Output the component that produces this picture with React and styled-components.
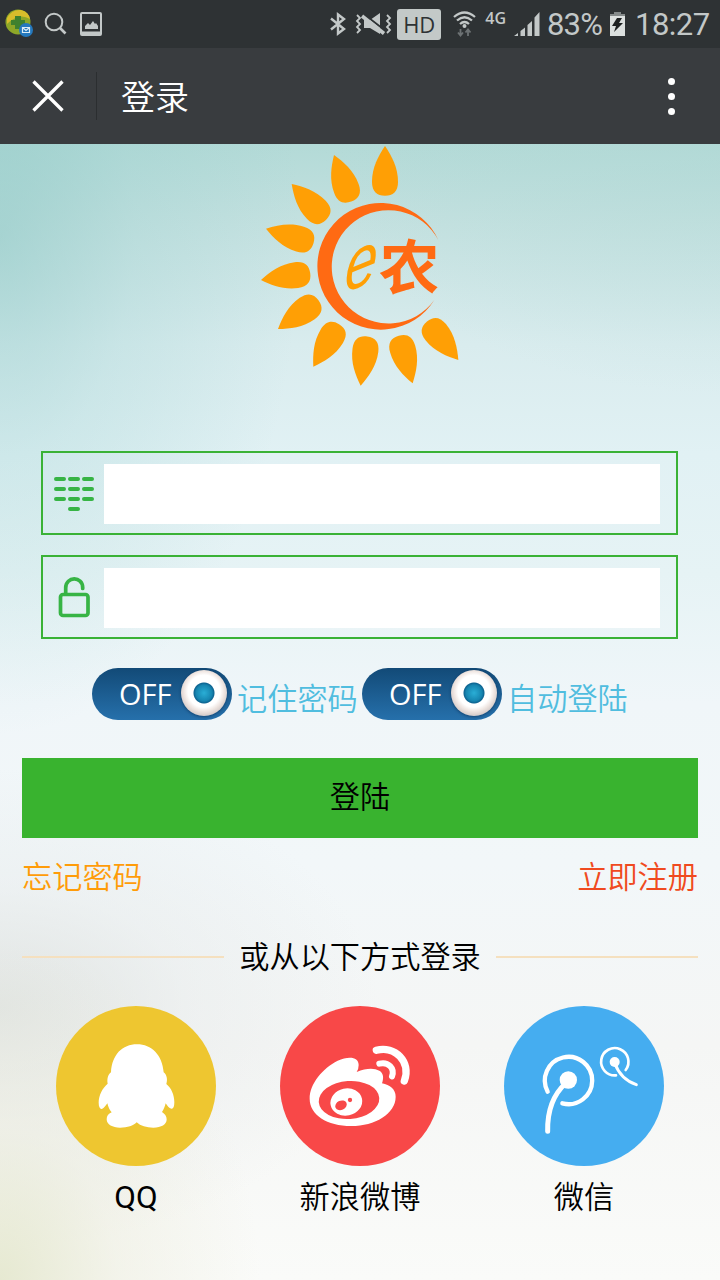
import React from "react";
import styled, { createGlobalStyle } from "styled-components";

const GlobalStyle = createGlobalStyle`
  * { box-sizing: border-box; }
  body { margin: 0; }
  svg { display: block; flex: none; }
`;

const Screen = styled.div`
  width: 720px;
  height: 1280px;
  display: flex;
  flex-direction: column;
  overflow: hidden;
  font-family: Roboto, "Noto Sans CJK SC", sans-serif;
  font-size: 30.2px;
  font-weight: 350;
  color: #000;
`;

const StatusBar = styled.header`
  height: 48px;
  flex: none;
  display: flex;
  align-items: center;
  justify-content: space-between;
  padding: 0 10px 0 5px;
  background: #2e3234;
  color: #c3c8c8;
`;

const StatusGroup = styled.div`
  display: flex;
  align-items: center;
`;

const HdBadge = styled.span`
  width: 44px;
  height: 31px;
  margin: 0 12px 0 5px;
  border-radius: 3px;
  background: #c3c9c8;
  color: #2e3234;
  font: 22px/30px "Open Sans", sans-serif;
  text-align: center;
`;

const Network = styled.span`
  height: 32px;
  margin: 0 8px 0 9px;
  font: 600 16px/20px "Open Sans", sans-serif;
`;

const StatusText = styled.span`
  width: ${(p) => p.$width}px;
  margin-left: ${(p) => p.$left || 0}px;
  font-size: 31px;
  font-weight: 400;
  line-height: 46px;
  letter-spacing: ${(p) => p.$spacing || 0}px;
  white-space: nowrap;
  padding-top: 2px;
`;

const TitleBar = styled.div`
  height: 96px;
  flex: none;
  display: flex;
  align-items: center;
  padding: 0 45px 0 32px;
  background: #393c3f;
  color: #fff;
`;

const TitleRule = styled.div`
  width: 1px;
  height: 48px;
  margin: 0 24px 0 32px;
  background: #2b2e30;
`;

const Title = styled.h1`
  flex: 1;
  margin: 0;
  padding-top: 3px;
  font-size: 34px;
  font-weight: inherit;
  line-height: 48px;
`;

const Dots = styled.div`
  display: flex;
  flex-direction: column;
  gap: 8px;
  i {
    width: 7px;
    height: 7px;
    border-radius: 50%;
    background: #fff;
  }
`;

const Content = styled.main`
  flex: 1;
  display: flex;
  flex-direction: column;
  padding: 0 22px;
  background:
    radial-gradient(ellipse 260px 340px at 0 100%, rgba(228, 231, 205, 0.9), rgba(236, 236, 220, 0.5) 45%, rgba(240, 240, 230, 0) 100%),
    radial-gradient(ellipse 380px 240px at 0 76%, rgba(222, 226, 224, 0.9), rgba(228, 232, 232, 0.4) 50%, rgba(236, 240, 240, 0) 100%),
    radial-gradient(ellipse 300px 500px at 0 8%, rgba(135, 197, 194, 0.5), rgba(150, 206, 205, 0.25) 45%, rgba(180, 220, 220, 0) 100%),
    radial-gradient(ellipse 400px 250px at 100% 0, rgba(176, 216, 213, 0.4), rgba(176, 216, 213, 0) 100%),
    linear-gradient(180deg, #b3dad7 0, #c4e1e0 80px, #d9ecee 200px, #e1f1f4 310px, #e6f3f5 430px, #f0f6f9 560px, #f2f7f9 720px, #f5f6f5 900px, #fafbf9 1136px);
`;

const LogoArea = styled.div`
  height: 307px;
  padding-left: 228px;
`;

const Field = styled.label`
  width: 637px;
  height: 84px;
  margin: 0 0 20px 19px;
  display: flex;
  align-items: center;
  padding: 0 16px 0 11px;
  border: 2px solid #3ab236;
`;

const Input = styled.input`
  flex: 1;
  height: 60px;
  min-width: 0;
  margin: 1px 0 0 8px;
  padding: 0 10px;
  border: 0;
  outline: 0;
  background: #fff;
  font: inherit;
`;

const Options = styled.div`
  display: flex;
  height: 52px;
  margin: 9px 0 38px 70px;
`;

const Toggle = styled.button`
  width: 140px;
  height: 52px;
  display: flex;
  align-items: center;
  justify-content: space-between;
  padding: 0 5px 0 27px;
  border: 0;
  border-radius: 26px;
  background: linear-gradient(#124a77, #2670ab);
  color: #fff;
  font: 500 29px/50px "Open Sans", sans-serif;
`;

const Knob = styled.span`
  width: 46px;
  height: 46px;
  margin-top: -2px;
  border-radius: 50%;
  background:
    radial-gradient(circle, #2aaed6 0, #1685b0 8px, #0e6491 10px, transparent 11px),
    radial-gradient(circle at 50% 46%, #fff 0, #fff 16px, #efe6e2 20px, #d2c8c6 25px);
  box-shadow: 0 1px 3px rgba(0, 20, 50, 0.45);
`;

const OptionLabel = styled.span`
  width: 120px;
  margin: 9px 5px 0;
  color: #50bddf;
  line-height: 46px;
  white-space: nowrap;
`;

const Submit = styled.button`
  height: 80px;
  flex: none;
  border: 0;
  padding: 0 0 7px;
  background: #39b32f;
  color: #000;
  font: inherit;
`;

const Links = styled.nav`
  height: 78px;
  display: flex;
  justify-content: space-between;
  line-height: 80px;
`;

const Link = styled.a`
  color: ${(p) => p.$color};
`;

const Divider = styled.div`
  height: 82px;
  margin-bottom: -2px;
  display: flex;
  align-items: center;
  gap: 15px;
  span {
    padding-bottom: 5px;
  }
  &::before, &::after {
    content: "";
    flex: 1;
    height: 2px;
    background: #f5e0bf;
  }
`;

const Providers = styled.div`
  display: flex;
  justify-content: space-between;
  padding: 10px 34px 0;
`;

const Provider = styled.div`
  width: 160px;
  display: flex;
  flex-direction: column;
  align-items: center;
  line-height: 63px;
  white-space: nowrap;
`;

const ProviderName = styled.span`
  font-size: ${(p) => (p.$latin ? 31.5 : 30.2)}px;
  font-weight: ${(p) => (p.$latin ? 400 : 350)};
`;

const Disc = styled.div`
  width: 160px;
  height: 160px;
  border-radius: 50%;
  background: ${(p) => p.$color};
`;

const PETALS = [
  [405, 18, 405, 168],
  [252, 45, 305, 188],
  [125, 132, 230, 242],
  [48, 266, 192, 310],
  [33, 420, 181, 400],
  [84, 567, 205, 482],
  [190, 680, 267, 553],
  [332, 737, 352, 588],
  [488, 730, 446, 586],
  [625, 660, 530, 543],
];

function SunLogo() {
  return (
    <svg width="220" height="250" viewBox="0 12 660 750">
      {PETALS.map(([x, y, bx, by]) => (
        <path
          key={x}
          fill="#ff9f05"
          transform={`translate(${x} ${y}) rotate(${(Math.atan2(x - bx, by - y) * 180) / Math.PI})`}
          d="M0 0C20 30 39 64 39 107C39 137 24 149 0 149S-39 137-39 107C-39 64-20 30 0 0Z"
        />
      ))}
      <path fill="#ff6a13" d="M565 300A190 190 0 1 0 553 480A170 170 0 1 1 565 300Z" />
      <text transform="translate(281 460) rotate(-22) skewX(-26) scale(.94 1)" fontFamily="Liberation Sans" fontStyle="italic" fontWeight="400" fontSize="200" fill="#ff9f05">e</text>
      <text transform="translate(387 447) scale(1.03 1)" fontFamily="Noto Sans CJK SC" fontWeight="700" fontSize="176" fill="#ff6a13">农</text>
    </svg>
  );
}

function AppBadgeIcon() {
  return (
    <svg width="29" height="30" viewBox="0 0 29 30">
      <circle cx="13" cy="13" r="12.500" fill="#8da728" />
      <path d="M2 9Q7 0 16 1Q24 3 25 10Q14 3 2 15Z" fill="#d8bd2b" />
      <path d="M10 7h6v4h4v5h-4v4h-6v-4H6v-5h4Z" fill="#3e812e" />
      <circle cx="21" cy="21" r="7" fill="#2478bd" />
      <path d="M17.500 18.500h7v5h-7zl3.500 3 3.500-3" fill="none" stroke="#dcecf5" strokeWidth="1.200" />
    </svg>
  );
}

const SpacedIcon = styled.svg`
  margin-left: ${(p) => p.$left || 0}px;
  margin-right: ${(p) => p.$right || 0}px;
`;

function SearchIcon() {
  return (
    <SpacedIcon $left={10} width="24" height="24" viewBox="0 0 24 24" fill="none" stroke="#c3c8c8">
      <circle cx="10" cy="10" r="8.300" strokeWidth="2" />
      <path d="M16 16L21.500 21.500" strokeWidth="2.600" />
    </SpacedIcon>
  );
}

function PictureIcon() {
  return (
    <SpacedIcon $left={12} width="22" height="24" viewBox="0 0 22 24">
      <path fill="#c3c8c8" fillRule="evenodd" d="M2 0H20Q22 0 22 2V22Q22 24 20 24H2Q0 24 0 22V2Q0 0 2 0ZM2 2V19.500H20V2Z" />
      <path fill="#c3c8c8" d="M5 17V14L8 11L10 13L13 9L15 12L16 11L18 14V17Z" />
    </SpacedIcon>
  );
}

function BluetoothIcon() {
  return (
    <svg width="16" height="24" viewBox="0 0 16 24" fill="none" stroke="#c3c8c8" strokeWidth="2.400">
      <path d="M1 6.500L14 17L8 21.500V2.500L14 7L1 17.500" />
    </svg>
  );
}

function MutedIcon() {
  return (
    <SpacedIcon $left={9} width="37" height="24" viewBox="0 0 37 24">
      <path fill="#c3c8c8" d="M9 8H15L25 1V22L15 16H9Z" />
      <path d="M10 3L32 20" stroke="#2e3234" strokeWidth="2" />
      <path d="M7 4L29 21.500" stroke="#c3c8c8" strokeWidth="3.600" />
      <path fill="none" stroke="#c3c8c8" strokeWidth="1.800" d="M2 3L5 6L2 9L5 12L2 15L5 18L2 21M32 3L35 6L32 9L35 12L32 15L35 18L32 21" />
    </SpacedIcon>
  );
}

function WifiIcon() {
  return (
    <svg width="23" height="26" viewBox="0 0 23 26" fill="none">
      <g stroke="#c3c8c8" strokeWidth="2.300">
        <path d="M1 6Q11.500-3 22 6" />
        <path d="M4 9.500Q11.500 3 19 9.500" />
        <path d="M7 13Q11.500 9 16 13" />
      </g>
      <circle cx="11.500" cy="15" r="2" fill="#c3c8c8" />
      <path d="M7.500 18V24M5 21.500L7.500 24.500L10 21.500M15 25V19M12.500 21.500L15 18.500L17.500 21.500" stroke="#6d7274" strokeWidth="1.800" />
    </svg>
  );
}

function SignalIcon() {
  return (
    <svg width="26" height="25" viewBox="0 0 26 25" fill="#c3c8c8">
      <path d="M0 24L4 21V24ZM6.500 19L11 15.500V24H6.500ZM13.500 13L18 9V24H13.500ZM20.500 5.500L25.500 0V24H20.500Z" />
    </svg>
  );
}

function BatteryIcon() {
  return (
    <SpacedIcon $right={9} width="17" height="24" viewBox="0 0 17 24">
      <path fill="#858a8a" d="M5 0H12V2H16V5H1V2H5Z" />
      <path fill="#dce0df" d="M1 4H16V24H1Z" />
      <path fill="#1d2021" d="M8 6H13L10 11H14L5 20L7 14H3Z" />
    </SpacedIcon>
  );
}

function CloseIcon() {
  return (
    <svg width="32" height="32" viewBox="0 0 32 32" fill="none" stroke="#fff" strokeWidth="3.300">
      <path d="M1.500 1.500L30.500 30.500M30.500 1.500L1.500 30.500" />
    </svg>
  );
}

function KeypadIcon() {
  return (
    <svg width="42" height="42" viewBox="0 0 42 42" fill="none" stroke="#37b445" strokeWidth="4" strokeLinecap="round">
      <path d="M2 7H10M16 7H24M30 7H38M2 17H10M16 17H24M30 17H38M2 27H10M16 27H24M30 27H38M16 37H24" />
    </svg>
  );
}

function UnlockIcon() {
  return (
    <svg width="42" height="42" viewBox="0 0 42 42" fill="none" stroke="#37b445" strokeWidth="3.700" strokeLinecap="round">
      <rect x="6.500" y="18.500" width="27.500" height="21" rx="2.500" />
      <path d="M11.700 17V12C11.700 0 28.700 0 28.700 11.500V12.500" />
    </svg>
  );
}

function QQIcon() {
  return (
    <svg width="160" height="160" viewBox="48 17 480 480" fill="#fff">
      <path d="M291 132C247 132 216 163 213 216C203 224 201 237 203 250C188 262 176 285 176 307C176 321 181 328 187 325C193 323 198 314 202 309C205 321 209 329 215 336C205 340 200 347 200 357C200 373 218 382 240 382C263 382 280 376 290 366C302 377 319 382 340 382C364 382 380 373 380 357C380 347 374 340 366 335C371 328 375 318 377 309C382 316 387 324 394 325C400 326 403 319 403 306C403 284 394 263 379 251C383 238 381 224 371 216C367 164 335 132 291 132Z" />
    </svg>
  );
}

function WeiboIcon() {
  return (
    <svg width="160" height="160" viewBox="30 18 480 480">
      <path fill="#fff" d="M119 296C119 251 158 205 203 182C236 167 266 170 266 195Q266 207 260 216C288 204 312 203 328 212C342 220 341 236 336 250C360 255 377 268 377 290C377 341 315 378 244 378C171 378 119 344 119 296Z" />
      <ellipse cx="237" cy="300" rx="91" ry="57" fill="#f84848" transform="rotate(-4 237 300)" />
      <ellipse cx="229" cy="306" rx="48" ry="41" fill="#fff" transform="rotate(-12 229 306)" />
      <ellipse cx="213" cy="316" rx="18" ry="14" fill="#f84848" transform="rotate(-25 213 316)" />
      <circle cx="240" cy="300" r="6.500" fill="#f84848" />
      <g fill="none" stroke="#fff" strokeLinecap="round">
        <path strokeWidth="22" d="M319 151C374 136 425 185 403 243" />
        <path strokeWidth="18" d="M328 191C355 184 375 205 366 229" />
      </g>
    </svg>
  );
}

function DandelionIcon() {
  return (
    <svg width="160" height="160" viewBox="30 18 480 480" fill="none" stroke="#fff" strokeLinecap="round">
      <path strokeWidth="13" d="M161 275A71 71 0 1 1 205 310" />
      <path strokeWidth="15" d="M161 394Q159 300 216 249" />
      <circle cx="223" cy="240" r="26" fill="#fff" stroke="none" />
      <path strokeWidth="8" d="M366 226A41 41 0 1 1 395 210" />
      <path strokeWidth="9" d="M362 189Q380 238 427 254" />
      <circle cx="362" cy="186" r="15" fill="#fff" stroke="none" />
    </svg>
  );
}

const PROVIDERS = [
  { name: "QQ", latin: true, color: "#eec630", Icon: QQIcon },
  { name: "新浪微博", color: "#f84848", Icon: WeiboIcon },
  { name: "微信", color: "#45adf0", Icon: DandelionIcon },
];

export default function App() {
  return (
    <Screen>
      <GlobalStyle />
      <StatusBar>
        <StatusGroup>
          <AppBadgeIcon />
          <SearchIcon />
          <PictureIcon />
        </StatusGroup>
        <StatusGroup>
          <BluetoothIcon />
          <MutedIcon />
          <HdBadge>HD</HdBadge>
          <WifiIcon />
          <Network>4G</Network>
          <SignalIcon />
          <StatusText $width={62} $left={7} $spacing={-0.8}>83%</StatusText>
          <BatteryIcon />
          <StatusText $width={75} $spacing={-0.5}>18:27</StatusText>
        </StatusGroup>
      </StatusBar>
      <TitleBar>
        <CloseIcon />
        <TitleRule />
        <Title>登录</Title>
        <Dots>
          <i />
          <i />
          <i />
        </Dots>
      </TitleBar>
      <Content>
        <LogoArea>
          <SunLogo />
        </LogoArea>
        <Field>
          <KeypadIcon />
          <Input type="text" />
        </Field>
        <Field>
          <UnlockIcon />
          <Input type="password" />
        </Field>
        <Options>
          <Toggle>OFF<Knob /></Toggle>
          <OptionLabel>记住密码</OptionLabel>
          <Toggle>OFF<Knob /></Toggle>
          <OptionLabel>自动登陆</OptionLabel>
        </Options>
        <Submit>登陆</Submit>
        <Links>
          <Link $color="#ff9c09">忘记密码</Link>
          <Link $color="#f04a20">立即注册</Link>
        </Links>
        <Divider><span>或从以下方式登录</span></Divider>
        <Providers>
          {PROVIDERS.map(({ name, latin, color, Icon }) => (
            <Provider key={name}>
              <Disc $color={color}>
                <Icon />
              </Disc>
              <ProviderName $latin={latin}>{name}</ProviderName>
            </Provider>
          ))}
        </Providers>
      </Content>
    </Screen>
  );
}
